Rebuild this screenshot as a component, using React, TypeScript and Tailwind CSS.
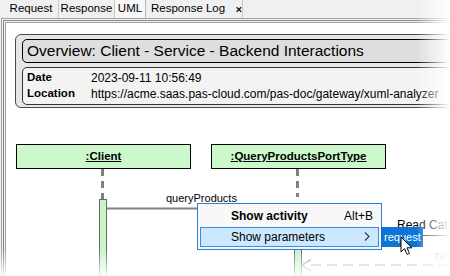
import React from 'react';

const tabs = 'h-full flex items-center justify-center border-r border-[#c9c9c9]';

function Lifeline({ name, left }: { name: string; left: number }) {
    return (
        <div
            className="absolute top-[35px] w-[175px] h-[25px] border border-black bg-[#ccf8cc] flex items-center justify-center"
            style={{ left }}
        >
            <span className="text-[11.5px] font-bold underline leading-none">{name}</span>
        </div>
    );
}

export default function App() {
    return (
        <div className="relative w-[450px] h-[276px] overflow-hidden bg-[#f0f0f0] flex flex-col font-['Liberation_Sans',Arial,sans-serif] text-black">
            {/* tab strip */}
            <div className="h-[18px] flex items-center text-[11.5px] shrink-0 whitespace-nowrap">
                <div className="w-[4px]" />
                <div className={`${tabs} w-[55px]`}>Request</div>
                <div className={`${tabs} w-[56px]`}>Response</div>
                <div className={`${tabs} w-[31px] bg-[#f7f7f7] border-r-[#b5b5b5]`}>UML</div>
                <div className="h-full w-[97px] flex items-center gap-[11px] pl-[5px] border-r border-[#c9c9c9]">
                    <span>Response Log</span>
                    <svg width="9" height="9" viewBox="0 0 9 9">
                        <path d="M1 1 L8 8 M8 1 L1 8" stroke="#111" strokeWidth="1.8" />
                    </svg>
                </div>
            </div>

            {/* framed panel */}
            <div className="flex-1 ml-[1px] border-t border-l border-[#a3a3a3] pt-[1px] pl-[1px] flex flex-col">
                <div className="flex-1 border-t border-l border-[#8a8a8a] pt-[1px] pl-[1px] flex flex-col">
                    <div className="flex-1 border-t border-l border-[#a3a3a3] bg-white flex flex-col overflow-hidden">
                        {/* overview */}
                        <div className="ml-[9px] mt-[11px] w-[470px] shrink-0 border border-[#4a4a4a] rounded-[6px] bg-[#e6e6e6] px-[6px] pt-[4px] pb-[2px] flex flex-col gap-[4px]">
                            <div className="h-[24px] border border-black rounded-[5px] bg-[#dedede] pl-[4px] flex items-center">
                                <span className="text-[15.5px] leading-none">Overview: Client - Service - Backend Interactions</span>
                            </div>
                            <div className="h-[38px] border border-[#333] rounded-[5px] bg-[#f3f3f3] px-[4px] py-[2px] flex flex-col text-[12px]">
                                <div className="h-[16px] flex items-center">
                                    <span className="w-[64px] font-bold text-[11.5px]">Date</span>
                                    <span>2023-09-11 10:56:49</span>
                                </div>
                                <div className="h-[16px] flex items-center whitespace-nowrap">
                                    <span className="w-[64px] font-bold text-[11.5px]">Location</span>
                                    <span>https://acme.saas.pas-cloud.com/pas-doc/gateway/xuml-analyzer</span>
                                </div>
                            </div>
                        </div>

                        {/* sequence diagram canvas */}
                        <div className="relative flex-1 mt-[1px]">
                            <Lifeline name=":Client" left={10} />
                            <Lifeline name=":QueryProductsPortType" left={205} />

                            <svg className="absolute left-0 top-0" width="444" height="167">
                                <line x1="96.5" y1="60" x2="96.5" y2="90" stroke="#808080" strokeWidth="3" strokeDasharray="7 5" />
                                <line x1="291.5" y1="60" x2="291.5" y2="88" stroke="#808080" strokeWidth="3" strokeDasharray="7 5" />
                                <line x1="100" y1="99.5" x2="289" y2="99.5" stroke="#808080" strokeWidth="2" />
                                <rect x="93.5" y="90.5" width="7" height="80" fill="#c9f5c9" stroke="#6a6a6a" />
                                <rect x="288.5" y="131.5" width="7" height="60" fill="#c9f5c9" stroke="#6a6a6a" />
                                <line x1="296" y1="126.5" x2="444" y2="126.5" stroke="#4a4a4a" strokeWidth="1" />
                                <line x1="305" y1="156" x2="444" y2="156" stroke="#b5b5b5" strokeWidth="1.5" strokeDasharray="10 6" />
                                <path d="M305 150.5 L296 156 L305 162" fill="none" stroke="#b5b5b5" strokeWidth="1.5" />
                            </svg>

                            <span className="absolute left-[160px] top-[83px] text-[11px] leading-[12px]">queryProducts</span>
                            <span className="absolute left-[391px] top-[110px] text-[12px] leading-[12px] whitespace-nowrap">Read Cat</span>
                            <span className="absolute left-[429px] top-[141px] text-[12px] leading-[12px] text-[#a9a9f5]">ret</span>

                            {/* context menu */}
                            <div className="absolute left-[191px] top-[94px] w-[185px] h-[47px] border border-[#2b7fd4] bg-[#f8f8f8] p-[2px] flex flex-col text-[12px]">
                                <div className="h-[22px] flex items-center pl-[31px] pr-[6px] justify-between">
                                    <span className="font-bold">Show activity</span>
                                    <span>Alt+B</span>
                                </div>
                                <div className="h-[21px] flex items-center pl-[30px] pr-[8px] justify-between border border-[#3b8de0] bg-[#cce8ff]">
                                    <span>Show parameters</span>
                                    <svg width="6" height="9" viewBox="0 0 6 9">
                                        <path d="M1 0.5 L5 4.5 L1 8.5" fill="none" stroke="#404040" strokeWidth="1.2" />
                                    </svg>
                                </div>
                            </div>

                            <div className="absolute left-[375px] top-[118px] w-[42px] h-[20px] border border-[#1a6fc4] bg-[#0a76d6] flex items-center pl-[2px]">
                                <span className="text-[11px] text-white leading-none">request</span>
                            </div>

                            <svg className="absolute left-[394px] top-[127px]" width="14" height="21" viewBox="0 0 14 21">
                                <path
                                    d="M1 1 L1 16 L4.5 12.5 L7 18.5 L9.5 17.5 L7 11.8 L12 11.8 Z"
                                    fill="#ffffff"
                                    stroke="#000000"
                                    strokeWidth="1"
                                    strokeLinejoin="round"
                                />
                            </svg>
                        </div>
                    </div>
                </div>
            </div>

            {/* screenshot fades */}
            <div className="absolute right-0 top-0 h-full w-[34px] bg-linear-to-r from-white/0 to-white" />
            <div className="absolute left-0 bottom-0 w-full h-[26px] bg-linear-to-b from-white/0 to-white/90" />
        </div>
    );
}
